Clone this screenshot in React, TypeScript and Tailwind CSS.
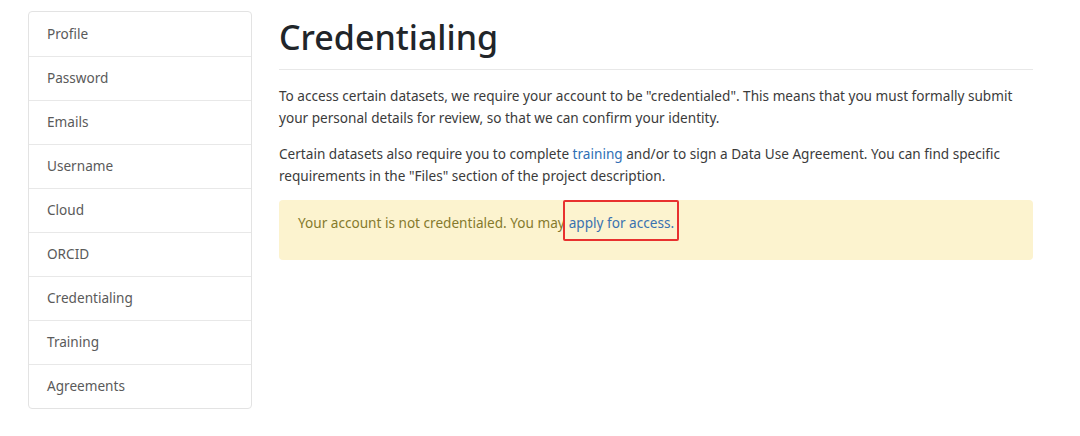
import React from 'react';

const NAV_ITEMS = ['Profile', 'Password', 'Emails', 'Username', 'Cloud', 'ORCID', 'Credentialing', 'Training', 'Agreements'];

export default function App() {
  return (
    <div className="min-h-[436px] bg-white" style={{ fontFamily: '"Noto Sans", "Open Sans", sans-serif' }}>
      <div className="flex items-start gap-[27px] pl-[28px] pt-[11px]">
        {/* Settings nav */}
        <nav className="w-[224px] shrink-0 rounded border border-[#e3e3e3]">
          {NAV_ITEMS.map((item, i) => (
            <div
              key={item}
              className={`h-[44px] flex items-center pl-[18px] text-[13.6px] text-[#5a5a5a] ${i > 0 ? 'border-t border-[#e8e8e8]' : ''}`}
            >
              {item}
            </div>
          ))}
        </nav>

        {/* Content */}
        <main className="w-[754px]">
          <h1 className="text-[34px] leading-[48px] font-medium text-[#212529] pt-[2px]">Credentialing</h1>
          <hr className="mt-[8px] border-t border-[#e8e8e8]" />
          <p className="mt-[15px] text-[13.6px] leading-[22px] text-[#3b3b3b]">
            To access certain datasets, we require your account to be "credentialed". This means that you must formally submit your personal details for review, so that we can confirm your identity.
          </p>
          <p className="mt-[14px] text-[13.6px] leading-[22px] text-[#3b3b3b]">
            Certain datasets also require you to complete <a className="text-[#2f6fb5]">training</a> and/or to sign a Data Use Agreement. You can find specific requirements in the "Files" section of the project description.
          </p>
          <div className="mt-[13px] h-[60px] rounded bg-[#fcf3cf] flex items-center pl-[19px] pb-[14px] text-[13.6px] text-[#857a2c]">
            <span>Your account is not credentialed. You may</span>
            <span className="relative ml-[4px]">
              <a className="text-[#3a72b0]">apply for access.</a>
              <span className="absolute -left-[6px] -right-[5px] -top-[13px] -bottom-[8px] border-2 border-[#e8312f] rounded-[2px]" />
            </span>
          </div>
        </main>
      </div>
    </div>
  );
}
